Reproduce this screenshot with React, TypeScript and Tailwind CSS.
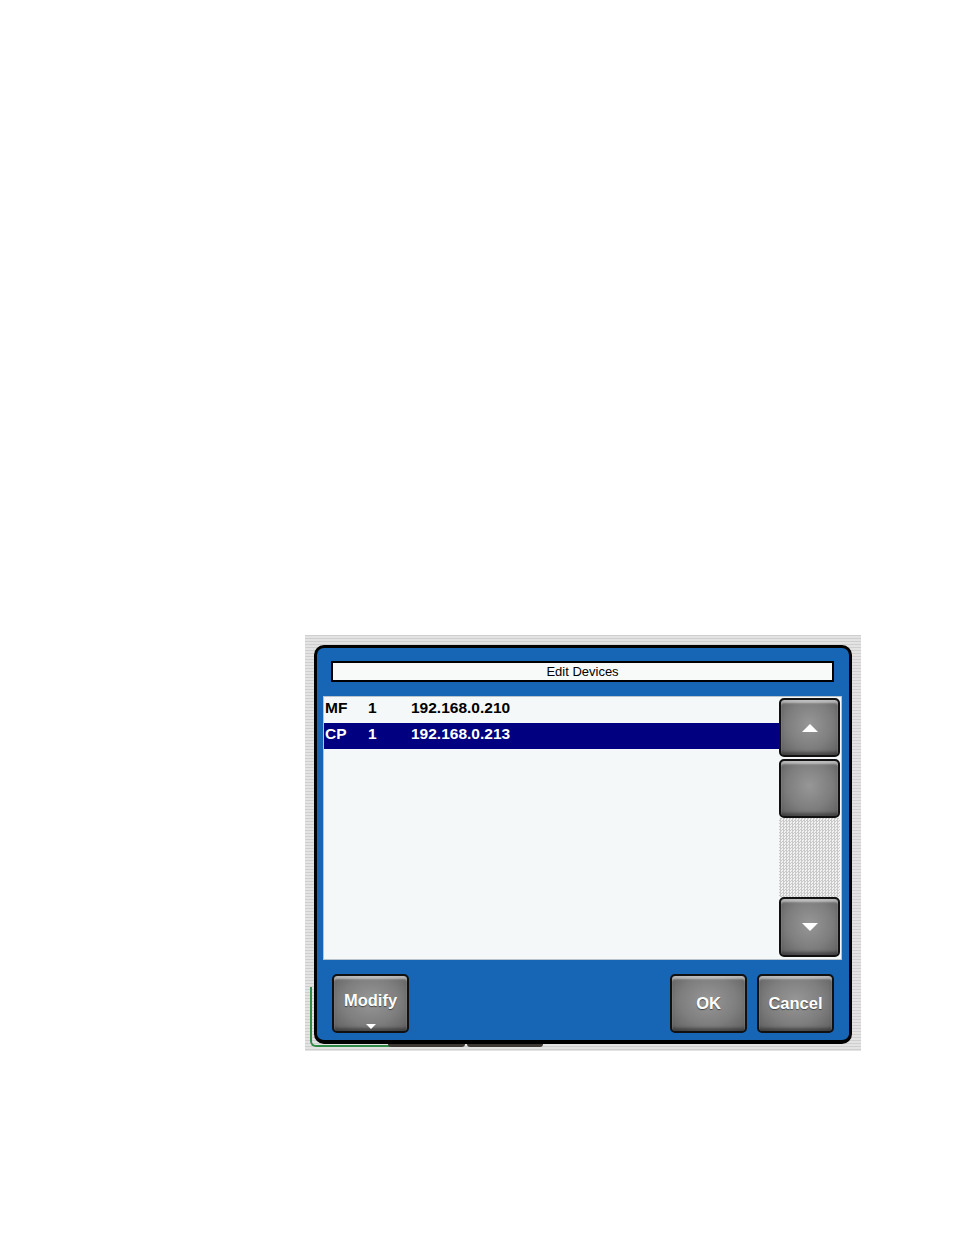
import React from "react";

function Tri({ dir, w, h }: { dir: "up" | "down"; w: number; h: number }) {
  return (
    <svg width={w} height={h} viewBox={`0 0 ${w} ${h}`}>
      {dir === "up" ? (
        <polygon points={`0,${h} ${w / 2},0 ${w},${h}`} fill="#ffffff" />
      ) : (
        <polygon points={`0,0 ${w},0 ${w / 2},${h}`} fill="#ffffff" />
      )}
    </svg>
  );
}

const btn =
  "rounded-[5px] border-2 border-[#111] bg-[radial-gradient(ellipse_at_50%_45%,#979797_0%,#7e7e7e_55%,#5e5e5e_100%)] shadow-[inset_0_3px_2px_rgba(255,255,255,0.5),inset_0_-3px_3px_rgba(0,0,0,0.35)]";

export default function App() {
  return (
    <div className="min-h-[1235px] w-[954px] bg-white pl-[305px] pt-[635px] font-['Liberation_Sans',Arial,sans-serif]">
      <div className="relative h-[416px] w-[556px] bg-[repeating-linear-gradient(180deg,#cfcfcf_0px,#cfcfcf_1px,#e3e3e3_1px,#e3e3e3_3px)] pb-[7px] pl-[9px] pr-[9px] pt-[10px]">
        {/* window behind (green edge + tabs) */}
        <div className="absolute left-[5px] top-[352px] h-[60px] w-[80px] rounded-bl-[6px] border-b-2 border-l-2 border-[#2f8a45]" />
        <div className="absolute left-[83px] top-[408px] h-[4px] w-[77px] rounded-b-[3px] bg-[#3d3733]" />
        <div className="absolute left-[162px] top-[408px] h-[4px] w-[76px] rounded-b-[3px] bg-[#3d3733]" />

        <div className="relative flex h-full flex-col rounded-[10px] border-[3px] border-b-[4px] border-black bg-[#1766b5]">
          {/* title */}
          <div className="ml-[14px] mr-[15px] mt-[13px] flex h-[21px] items-center justify-center border-2 border-black bg-[#f8fafa] text-[13px] leading-none text-black">
            Edit Devices
          </div>

          {/* list */}
          <div className="ml-[6px] mr-[7px] mt-[14px] flex h-[264px] border border-[#b9c3cc] bg-[#f5f8f8]">
            <div className="flex flex-1 flex-col">
              <div className="flex h-[26px] items-center pb-[4px] pl-[1px] text-[15.5px] font-bold leading-none text-black">
                <span className="w-[43px]">MF</span>
                <span className="w-[43px]">1</span>
                <span>192.168.0.210</span>
              </div>
              <div className="flex h-[26px] items-center bg-[#000080] pb-[4px] pl-[1px] text-[15.5px] font-bold leading-none text-white">
                <span className="w-[43px]">CP</span>
                <span className="w-[43px]">1</span>
                <span>192.168.0.213</span>
              </div>
            </div>
            <div className="mr-[1px] flex w-[61px] flex-col pt-[1px]">
              <div className={`flex h-[59px] items-center justify-center ${btn}`}>
                <Tri dir="up" w={16} h={8} />
              </div>
              <div className={`mt-[2px] h-[59px] ${btn}`} />
              <div className="h-[79px] bg-[conic-gradient(#c9c9c9_25%,#f2f2f2_0_50%,#c9c9c9_0_75%,#f2f2f2_0)] bg-[length:3px_3px]" />
              <div className={`flex h-[60px] items-center justify-center ${btn}`}>
                <Tri dir="down" w={16} h={8} />
              </div>
            </div>
          </div>

          {/* buttons */}
          <div className="mt-[14px] flex h-[59px] px-[15px]">
            <div className={`flex w-[77px] flex-col items-center ${btn}`}>
              <span className="mt-[16px] text-[16.5px] font-bold leading-none text-white [text-shadow:0_1px_1px_rgba(0,0,0,0.5)]">
                Modify
              </span>
              <span className="mt-[15px] flex">
                <Tri dir="down" w={10} h={5} />
              </span>
            </div>
            <div className="flex-1" />
            <div className={`flex w-[77px] items-center justify-center ${btn}`}>
              <span className="text-[16.5px] font-bold leading-none text-white [text-shadow:0_1px_1px_rgba(0,0,0,0.5)]">
                OK
              </span>
            </div>
            <div className={`ml-[10px] flex w-[77px] items-center justify-center ${btn}`}>
              <span className="text-[16.5px] font-bold leading-none text-white [text-shadow:0_1px_1px_rgba(0,0,0,0.5)]">
                Cancel
              </span>
            </div>
          </div>
        </div>
      </div>
    </div>
  );
}
